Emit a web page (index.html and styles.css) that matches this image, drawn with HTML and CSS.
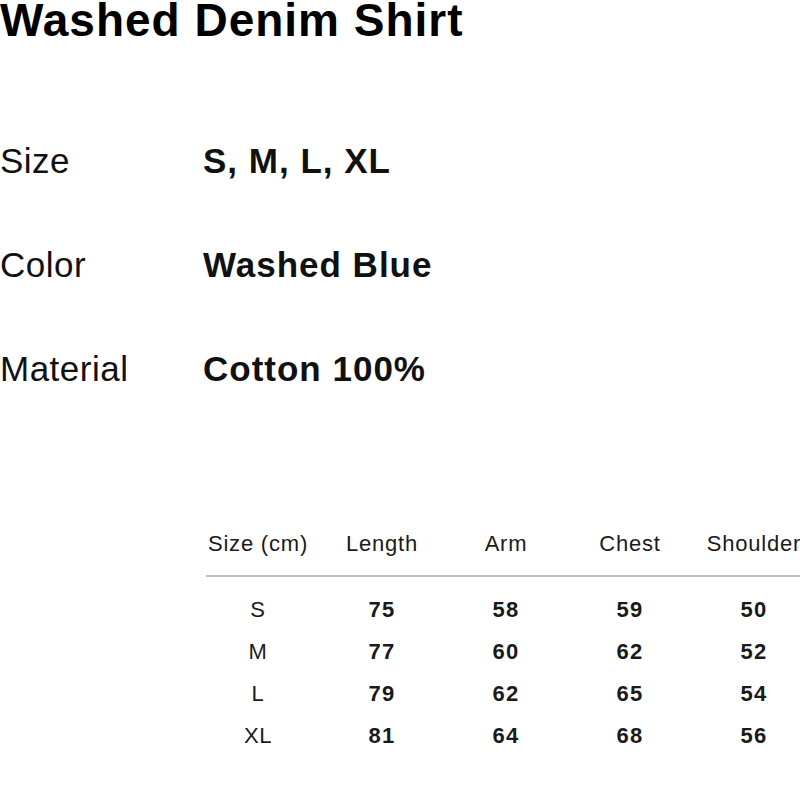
FILE: index.html
```html
<!DOCTYPE html>
<html>
<head>
<meta charset="utf-8">
<link rel="stylesheet" href="styles.css">
</head>
<body>
<div class="page">
  <h1 class="title">Washed Denim Shirt</h1>
  <div class="specs">
    <div class="spec-label">Size</div><div class="spec-value">S, M, L, XL</div>
    <div class="spec-label">Color</div><div class="spec-value">Washed Blue</div>
    <div class="spec-label">Material</div><div class="spec-value">Cotton 100%</div>
  </div>
  <div class="chart">
    <div class="chart-head">
      <div class="cell">Size (cm)</div>
      <div class="cell">Length</div>
      <div class="cell">Arm</div>
      <div class="cell">Chest</div>
      <div class="cell">Shoulder</div>
    </div>
    <div class="chart-rule"></div>
    <div class="chart-body">
      <div class="cell">S</div><div class="cell num">75</div><div class="cell num">58</div><div class="cell num">59</div><div class="cell num">50</div>
      <div class="cell">M</div><div class="cell num">77</div><div class="cell num">60</div><div class="cell num">62</div><div class="cell num">52</div>
      <div class="cell">L</div><div class="cell num">79</div><div class="cell num">62</div><div class="cell num">65</div><div class="cell num">54</div>
      <div class="cell">XL</div><div class="cell num">81</div><div class="cell num">64</div><div class="cell num">68</div><div class="cell num">56</div>
    </div>
  </div>
</div>
</body>
</html>
```
FILE: styles.css
```css
html, body {
  margin: 0;
  padding: 0;
  background: #ffffff;
  overflow: hidden;
}
body {
  font-family: "Liberation Sans", Arial, Helvetica, sans-serif;
  color: #111111;
  width: 800px;
  height: 800px;
}
.page {
  width: 800px;
}
.title {
  margin: 0;
  font-size: 46px;
  line-height: 41px;
  font-weight: 700;
  color: #000000;
  letter-spacing: 1px;
}
.specs {
  display: grid;
  grid-template-columns: 203px auto;
  row-gap: 64px;
  margin-top: 100px;
  font-size: 35px;
  line-height: 40px;
}
.spec-label {
  font-weight: 400;
  letter-spacing: 0.5px;
}
.spec-value {
  font-weight: 700;
  letter-spacing: 1px;
}
.chart {
  margin-top: 142px;
  font-size: 22px;
  color: #1a1a1a;
}
.chart-head, .chart-body {
  display: grid;
  grid-template-columns: repeat(5, 124px);
  margin-left: 196px;
  white-space: nowrap;
}
.chart-head .cell {
  line-height: 26px;
  letter-spacing: 0.8px;
}
.chart-body .cell {
  line-height: 42px;
  letter-spacing: 0.6px;
}
.cell {
  text-align: center;
}
.num {
  font-weight: 700;
}
.chart-body .num {
  letter-spacing: 1.2px;
}
.chart-rule {
  margin: 18px 0 12px 206px;
  height: 2px;
  background: #bdbdbd;
}
```
